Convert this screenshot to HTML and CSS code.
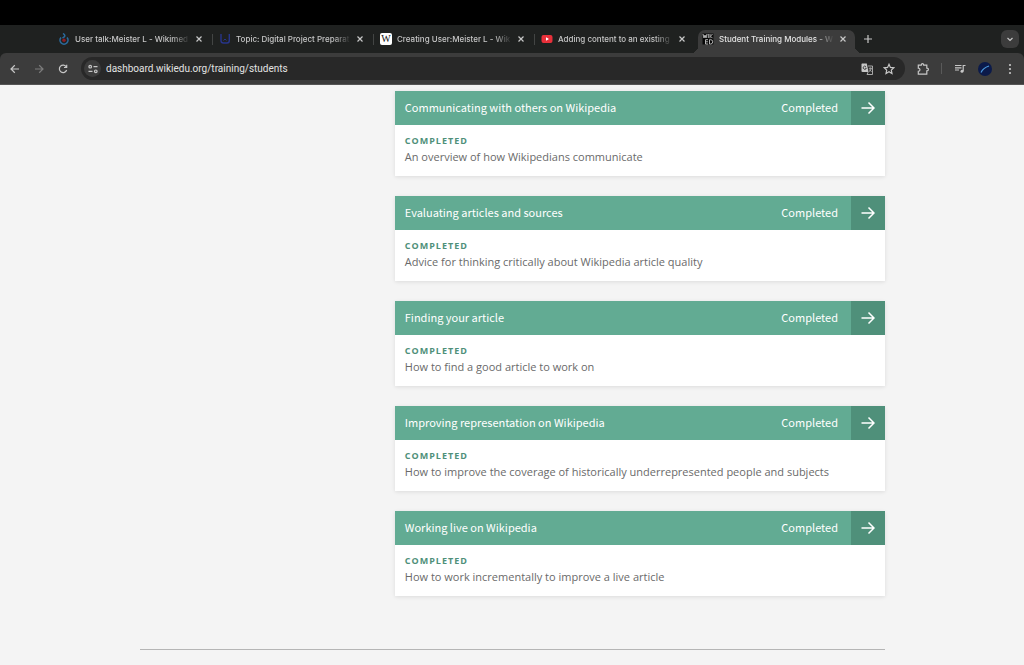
FILE: index.html
```html
<!DOCTYPE html>
<html lang="en">
<head>
<meta charset="utf-8">
<meta name="viewport" content="width=device-width, initial-scale=1">
<title>Student Training Modules</title>
<link rel="stylesheet" href="styles.css">
</head>
<body>
<header class="browser">
  <div class="menubar"></div>
  <div class="tabstrip">
    <div class="tab">
      <svg class="favicon" viewBox="0 0 12 12"><path d="M3 4.500A4 4 0 1 0 9 4.500" fill="none" stroke="#2b6a9c" stroke-width="1.600"/><path d="M5 .5C8 2.500 7 3.500 4.500 5" fill="none" stroke="#2b6a9c" stroke-width="1.500"/><circle cx="6" cy="7.200" r="1.700" fill="#8e1c22"/></svg>
      <span class="tab-title">User talk:Meister L - Wikimed</span>
      <button class="close" aria-label="Close tab"><svg viewBox="0 0 8 8"><path d="M1.500 1.500l5 5M6.500 1.500l-5 5"/></svg></button>
    </div>
    <span class="tab-sep"></span>
    <div class="tab">
      <svg class="favicon" viewBox="0 0 12 12"><path d="M2 1v6.500q0 2.500 2.500 2.500H8q2.300 0 2.300-2.500V1" fill="none" stroke="#27358a" stroke-width="1.400"/><path d="M4.500 7.500L6 6l1.500 1.500" fill="none" stroke="#27358a"/></svg>
      <span class="tab-title">Topic: Digital Project Preparat</span>
      <button class="close" aria-label="Close tab"><svg viewBox="0 0 8 8"><path d="M1.500 1.500l5 5M6.500 1.500l-5 5"/></svg></button>
    </div>
    <span class="tab-sep"></span>
    <div class="tab">
      <span class="favicon favicon-w">W</span>
      <span class="tab-title">Creating User:Meister L - Wik</span>
      <button class="close" aria-label="Close tab"><svg viewBox="0 0 8 8"><path d="M1.500 1.500l5 5M6.500 1.500l-5 5"/></svg></button>
    </div>
    <span class="tab-sep"></span>
    <div class="tab">
      <svg class="favicon" viewBox="0 0 12 12"><rect x=".5" y="2" width="11" height="8" rx="2" fill="#e8303a"/><path d="M5 4.300L8 6 5 7.700z" fill="#fff"/></svg>
      <span class="tab-title">Adding content to an existing</span>
      <button class="close" aria-label="Close tab"><svg viewBox="0 0 8 8"><path d="M1.500 1.500l5 5M6.500 1.500l-5 5"/></svg></button>
    </div>
    <span class="tab-sep clear"></span>
    <div class="tab active">
      <svg class="favicon" viewBox="0 0 12 12"><rect x=".5" y=".5" width="11" height="11" fill="#080808"/><path d="M1 1l1 4 1-3 1 3 1-4M6.300 1v4M8 1v4.200M10.500 1L8.500 3.200l2 2M6 6.700H3.500V11H6M3.500 8.800H6M7.500 6.700V11h1.200Q10.700 11 10.700 8.800T8.700 6.700z" fill="none" stroke="#c4c4c4" stroke-width=".9"/></svg>
      <span class="tab-title">Student Training Modules - W</span>
      <button class="close" aria-label="Close tab"><svg viewBox="0 0 8 8"><path d="M1.500 1.500l5 5M6.500 1.500l-5 5"/></svg></button>
    </div>
    <button class="new-tab" aria-label="New tab"><svg viewBox="0 0 10 10"><path d="M5 1v8M1 5h8"/></svg></button>
    <button class="tab-search" aria-label="Search tabs"><svg viewBox="0 0 10 10"><path d="M2.500 4L5 6.500 7.500 4"/></svg></button>
  </div>
  <div class="toolbar">
    <button class="tool" aria-label="Back"><svg viewBox="0 0 12 12"><path d="M10 6H2.200M5.800 2.300L2 6l3.800 3.700"/></svg></button>
    <button class="tool dim" aria-label="Forward"><svg viewBox="0 0 12 12"><path d="M2 6h7.800M6.200 2.300L10 6 6.200 9.700"/></svg></button>
    <button class="tool" aria-label="Reload"><svg viewBox="0 0 12 12"><path d="M9.300 4A3.700 3.700 0 1 0 9.600 7M9.700 1.800v2.700H7"/></svg></button>
    <div class="address">
      <button class="site-info" aria-label="Site information"><svg viewBox="0 0 12 12"><circle cx="3.200" cy="3.700" r="1.300"/><path d="M6.500 3.700h4M1.500 8.300h4"/><circle cx="8.800" cy="8.300" r="1.300"/></svg></button>
      <input class="url" type="text" aria-label="Address" value="dashboard.wikiedu.org/training/students">
      <button class="tool" aria-label="Translate"><svg viewBox="0 0 12 12"><path d="M1 .5h4.800l1.700 8.500H1.500L.5 8.500V1z" fill="#c7c7c7" stroke="none"/><path d="M7 3h4.500v8.500H6L7.200 9M7.800 5.300h3M9.300 4.500v.8M10.300 5.500Q9.800 7.500 8 8.500M8.300 6.500l2.200 2.300" stroke-width=".8"/><path d="M5 3.700A1.600 1.600 0 1 0 5.300 5.200H4" stroke="#282828" stroke-width=".8"/></svg></button>
      <button class="tool star" aria-label="Bookmark"><svg viewBox="0 0 12 12"><path d="M6 1.300l1.400 3.100 3.400.4-2.500 2.300.7 3.400L6 8.800l-3 1.700.7-3.400-2.500-2.300 3.400-.4z"/></svg></button>
    </div>
    <button class="tool" aria-label="Extensions"><svg viewBox="0 0 12 12"><path d="M1.300 2.200h3Q4.300.7 5.500.7t1.200 1.500h3.100v2.900Q11.400 5.100 11.400 6.500T9.800 7.900v3.300H1.300V8.300Q3 8.100 3 6.700T1.300 5.100z"/></svg></button>
    <span class="tool-sep"></span>
    <button class="tool" aria-label="Media controls"><svg viewBox="0 0 12 12"><path d="M1 2.500h6.500M1 4.800h6.500M1 7h4M9.200 8V2.500h2.300"/><circle cx="8" cy="8.300" r="1.500" fill="#c7c7c7" stroke="none"/></svg></button>
    <button class="avatar" aria-label="Profile"><svg viewBox="0 0 14 14"><circle cx="7" cy="7" r="7" fill="#0b1a4a"/><path d="M3 10.500Q5 6 11 4" fill="none" stroke="#4b9be0" stroke-width="1.200"/></svg></button>
    <button class="tool" aria-label="Menu"><svg viewBox="0 0 12 12"><g fill="#c7c7c7" stroke="none"><circle cx="6" cy="2" r="1.100"/><circle cx="6" cy="6" r="1.100"/><circle cx="6" cy="10" r="1.100"/></g></svg></button>
  </div>
</header>
<main class="page">
  <ol class="modules">
    <li class="module">
      <a class="module-head" href="#communicating"><span class="module-name">Communicating with others on Wikipedia</span><span class="status">Completed</span><span class="arrow"><svg viewBox="0 0 14 14"><path d="M.5 7H13M7.500 1.500L13 7l-5.500 5.500"/></svg></span></a>
      <div class="module-body"><h2 class="progress">Completed</h2><p class="summary">An overview of how Wikipedians communicate</p></div>
    </li>
    <li class="module">
      <a class="module-head" href="#evaluating"><span class="module-name">Evaluating articles and sources</span><span class="status">Completed</span><span class="arrow"><svg viewBox="0 0 14 14"><path d="M.5 7H13M7.500 1.500L13 7l-5.500 5.500"/></svg></span></a>
      <div class="module-body"><h2 class="progress">Completed</h2><p class="summary">Advice for thinking critically about Wikipedia article quality</p></div>
    </li>
    <li class="module">
      <a class="module-head" href="#finding"><span class="module-name">Finding your article</span><span class="status">Completed</span><span class="arrow"><svg viewBox="0 0 14 14"><path d="M.5 7H13M7.500 1.500L13 7l-5.500 5.500"/></svg></span></a>
      <div class="module-body"><h2 class="progress">Completed</h2><p class="summary">How to find a good article to work on</p></div>
    </li>
    <li class="module">
      <a class="module-head" href="#representation"><span class="module-name">Improving representation on Wikipedia</span><span class="status">Completed</span><span class="arrow"><svg viewBox="0 0 14 14"><path d="M.5 7H13M7.500 1.500L13 7l-5.500 5.500"/></svg></span></a>
      <div class="module-body"><h2 class="progress">Completed</h2><p class="summary">How to improve the coverage of historically underrepresented people and subjects</p></div>
    </li>
    <li class="module">
      <a class="module-head" href="#live"><span class="module-name">Working live on Wikipedia</span><span class="status">Completed</span><span class="arrow"><svg viewBox="0 0 14 14"><path d="M.5 7H13M7.500 1.500L13 7l-5.500 5.500"/></svg></span></a>
      <div class="module-body"><h2 class="progress">Completed</h2><p class="summary">How to work incrementally to improve a live article</p></div>
    </li>
  </ol>
  <hr class="rule">
</main>
</body>
</html>
```
FILE: styles.css
```css
* { box-sizing: border-box; }
body { margin: 0; background: #f4f4f4; font-family: "Open Sans", sans-serif; }
button { display: flex; align-items: center; justify-content: center; flex: none; padding: 0; border: 0; background: none; }
svg { display: block; }

/* Browser window */
.browser { font-family: Inter, "Liberation Sans", sans-serif; background: #1f2120; color: #c7c7c7; }
.browser button svg { fill: none; stroke: #c7c7c7; stroke-width: 1.2; }
.menubar { height: 25px; background: #000; }
.tabstrip { display: flex; align-items: center; height: 28px; padding: 0 5px 0 54px; }
.tab { display: flex; align-items: center; flex: 0 1 157px; min-width: 0; height: 23px; padding: 0 8px 0 4px; }
.tab.active { position: relative; align-self: flex-end; padding-bottom: 5px; border-radius: 7px 7px 0 0; background: #3c3c3c; color: #e3e3e3; }
.tab.active::before, .tab.active::after { content: ""; position: absolute; bottom: 0; width: 7px; height: 7px; }
.tab.active::before { right: 100%; background: radial-gradient(circle at 0 0, #1f2120 7px, #3c3c3c 7px); }
.tab.active::after { left: 100%; background: radial-gradient(circle at 100% 0, #1f2120 7px, #3c3c3c 7px); }
.favicon { flex: none; width: 12px; height: 12px; margin-right: 5px; }
.favicon-w { border-radius: 2px; background: #fff; color: #111; font: 10px/12px "Liberation Serif", serif; text-align: center; }
.tab-title { flex: 1; min-width: 0; white-space: nowrap; font-size: 8px; font-weight: 500; line-height: 12px; -webkit-mask-image: linear-gradient(to right, #000 calc(100% - 18px), transparent); mask-image: linear-gradient(to right, #000 calc(100% - 18px), transparent); }
.close { width: 8px; height: 8px; margin-left: 5px; }
.close svg { width: 8px; }
.tab-sep { flex: none; width: 1px; height: 11px; margin: 0 2px 0 1px; background: #434544; }
.tab-sep.clear { background: none; }
.new-tab { width: 18px; height: 18px; margin-left: 4px; }
.new-tab svg { width: 10px; }
.tab-search { width: 18px; height: 18px; margin-left: auto; border-radius: 6px; background: #3c3c3c; }
.tab-search svg { width: 10px; }
.toolbar { display: flex; align-items: center; gap: 12px; height: 32px; padding: 0 8px 0 9px; border-bottom: 1px solid #555; border-radius: 6px 6px 0 0; background: #3c3c3c; }
.tool { width: 12px; height: 12px; }
.tool svg { width: 12px; }
.tool.dim svg { stroke: #7c7c7c; }
.address { display: flex; align-items: center; flex: 1; min-width: 0; height: 23px; padding: 0 10px 0 3px; border-radius: 12px; background: #282828; }
.site-info { width: 17px; height: 17px; border-radius: 50%; background: #3c3c3c; }
.site-info svg { width: 12px; }
.url { flex: 1; min-width: 0; padding: 0; margin-left: 5px; border: 0; outline: 0; background: none; color: #e3e3e3; font: 400 10px/14px Roboto, "Liberation Sans", sans-serif; }
.star { margin-left: 10px; }
.tool-sep { width: 1px; height: 11px; background: #5a5a5a; }
.avatar svg { width: 14px; }
.browser .avatar svg circle { stroke: none; }

/* Training modules */
.page { padding: 6px 139px 0 140px; }
.modules { display: grid; gap: 20px; width: 65.8%; margin: 0 0 53px auto; padding: 0; list-style: none; }
.module { background: #fff; box-shadow: 0 1px 4px rgba(0, 0, 0, .1); }
.module-head { display: flex; align-items: center; height: 34px; padding-left: 10px; background: #62ab93; color: #fff; font: 400 11px/18px "Noto Sans CJK SC", sans-serif; text-decoration: none; }
.module-name, .status { padding-bottom: 2px; }
.module-name { flex: 1; }
.status { margin-right: 13px; }
.arrow { display: flex; align-items: center; justify-content: center; align-self: stretch; width: 34px; background: #4f907a; }
.arrow svg { width: 14px; fill: none; stroke: #fff; stroke-width: 1.5; }
.module-body { padding: 9px 10px 10px; }
.progress { margin: 0; color: #4f907a; font-size: 9px; font-weight: 700; line-height: 14px; letter-spacing: 1px; text-transform: uppercase; }
.summary { margin: 0; color: #6a6a6a; font-size: 11px; line-height: 18px; }
.rule { height: 1px; margin: 0; border: 0; background: #b5b5b5; }
```
